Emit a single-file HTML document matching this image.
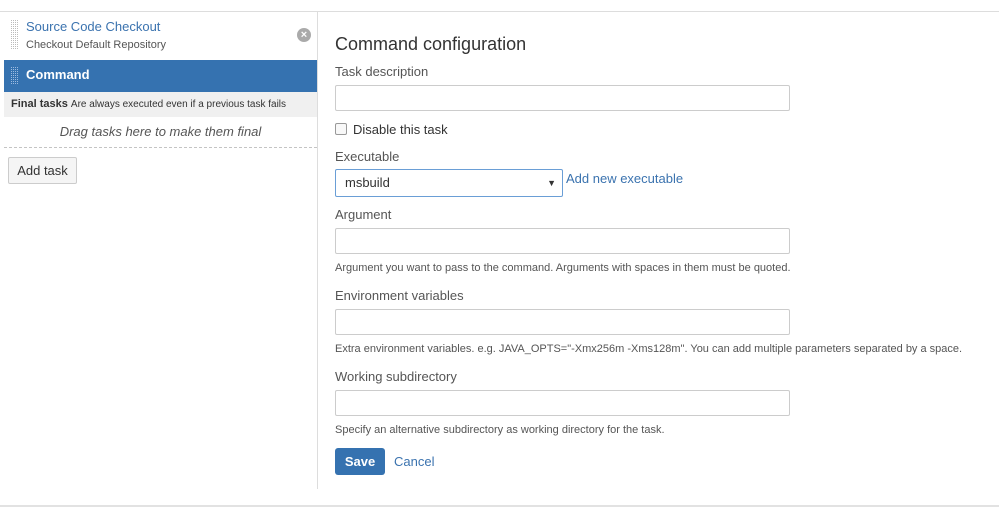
<!DOCTYPE html>
<html><head><style>
*{box-sizing:border-box;margin:0;padding:0}
body{width:999px;height:509px;background:#fff;font-family:"Liberation Sans",Arial,sans-serif;color:#333;position:relative;overflow:hidden}
.a{position:absolute}
.lbl{font-size:13px;color:#555}
.inp{position:absolute;left:335px;width:455px;height:26px;border:1px solid #ccc;border-radius:2px;background:#fff}
.help{font-size:11px;color:#555}
</style></head><body>
<svg width="0" height="0" style="position:absolute"><defs>
<pattern id="pg" width="2" height="2" patternUnits="userSpaceOnUse"><rect width="1" height="1" fill="#bbb"/></pattern>
<pattern id="pw" width="2" height="2" patternUnits="userSpaceOnUse"><rect width="1" height="1" fill="#9dbbe0"/></pattern>
</defs></svg>
<div class="a" style="left:0;top:11px;width:999px;height:1px;background:#ddd"></div>
<div class="a" style="left:0;top:505px;width:999px;height:2px;background:#e2e2e2"></div>
<div class="a" style="left:317px;top:11px;width:1px;height:478px;background:#ddd"></div>

<svg class="a" style="left:11px;top:20px" width="8" height="30"><rect width="8" height="30" fill="url(#pg)"/></svg>
<div class="a" style="left:26px;top:19px;font-size:13px;color:#3b73af">Source Code Checkout</div>
<div class="a" style="left:26px;top:39px;font-size:11px;color:#555">Checkout Default Repository</div>
<div class="a" style="left:297px;top:28px;width:14px;height:14px;border-radius:50%;background:#aaa;color:#fff;font-size:11px;line-height:14px;text-align:center;font-weight:bold">×</div>

<div class="a" style="left:4px;top:60px;width:313px;height:32px;background:#3572b0"></div>
<svg class="a" style="left:11px;top:67px" width="8" height="17"><rect width="8" height="17" fill="url(#pw)"/></svg>
<div class="a" style="left:26px;top:67px;font-size:13px;font-weight:bold;color:#fff">Command</div>
<div class="a" style="left:4px;top:92px;width:313px;height:25px;background:#f0f0f0"></div>
<div class="a" style="left:11px;top:98px;font-size:11px;color:#333"><b>Final tasks</b> <span style="font-size:10px">Are always executed even if a previous task fails</span></div>
<div class="a" style="left:4px;top:124px;width:313px;text-align:center;font-size:13px;font-style:italic;color:#555">Drag tasks here to make them final</div>
<div class="a" style="left:4px;top:147px;width:313px;border-top:1px dashed #c4c4c4"></div>
<div class="a" style="left:8px;top:157px;width:69px;height:27px;border:1px solid #ccc;border-radius:2px;background:#f5f5f5;font-size:13px;line-height:25px;text-align:center;color:#333">Add task</div>

<div class="a" style="left:335px;top:34px;font-size:18px;color:#333">Command configuration</div>
<div class="a lbl" style="left:335px;top:64px">Task description</div>
<div class="inp" style="top:85px"></div>
<div class="a" style="left:335px;top:123px;width:12px;height:12px;border:1px solid #999;border-radius:2px;background:#f8f8f8"></div>
<div class="a" style="left:353px;top:122px;font-size:13px;color:#333">Disable this task</div>
<div class="a lbl" style="left:335px;top:149px">Executable</div>
<div class="a" style="left:335px;top:169px;width:228px;height:28px;border:1px solid #6a9ed6;border-radius:2px;background:#fff;font-size:13px;line-height:26px;padding-left:9px;color:#333">msbuild<span style="position:absolute;right:6px;font-size:9px">▼</span></div>
<div class="a" style="left:566px;top:171px;font-size:13px;color:#3b73af">Add new executable</div>
<div class="a lbl" style="left:335px;top:207px">Argument</div>
<div class="inp" style="top:228px"></div>
<div class="a help" style="left:335px;top:262px">Argument you want to pass to the command. Arguments with spaces in them must be quoted.</div>
<div class="a lbl" style="left:335px;top:288px">Environment variables</div>
<div class="inp" style="top:309px"></div>
<div class="a help" style="left:335px;top:343px">Extra environment variables. e.g. JAVA_OPTS="-Xmx256m -Xms128m". You can add multiple parameters separated by a space.</div>
<div class="a lbl" style="left:335px;top:369px">Working subdirectory</div>
<div class="inp" style="top:390px"></div>
<div class="a help" style="left:335px;top:424px">Specify an alternative subdirectory as working directory for the task.</div>
<div class="a" style="left:335px;top:448px;width:50px;height:27px;background:#3572b0;border-radius:3px;color:#fff;font-weight:bold;font-size:13px;line-height:27px;text-align:center">Save</div>
<div class="a" style="left:394px;top:454px;font-size:13px;color:#3b73af">Cancel</div>
</body></html>
